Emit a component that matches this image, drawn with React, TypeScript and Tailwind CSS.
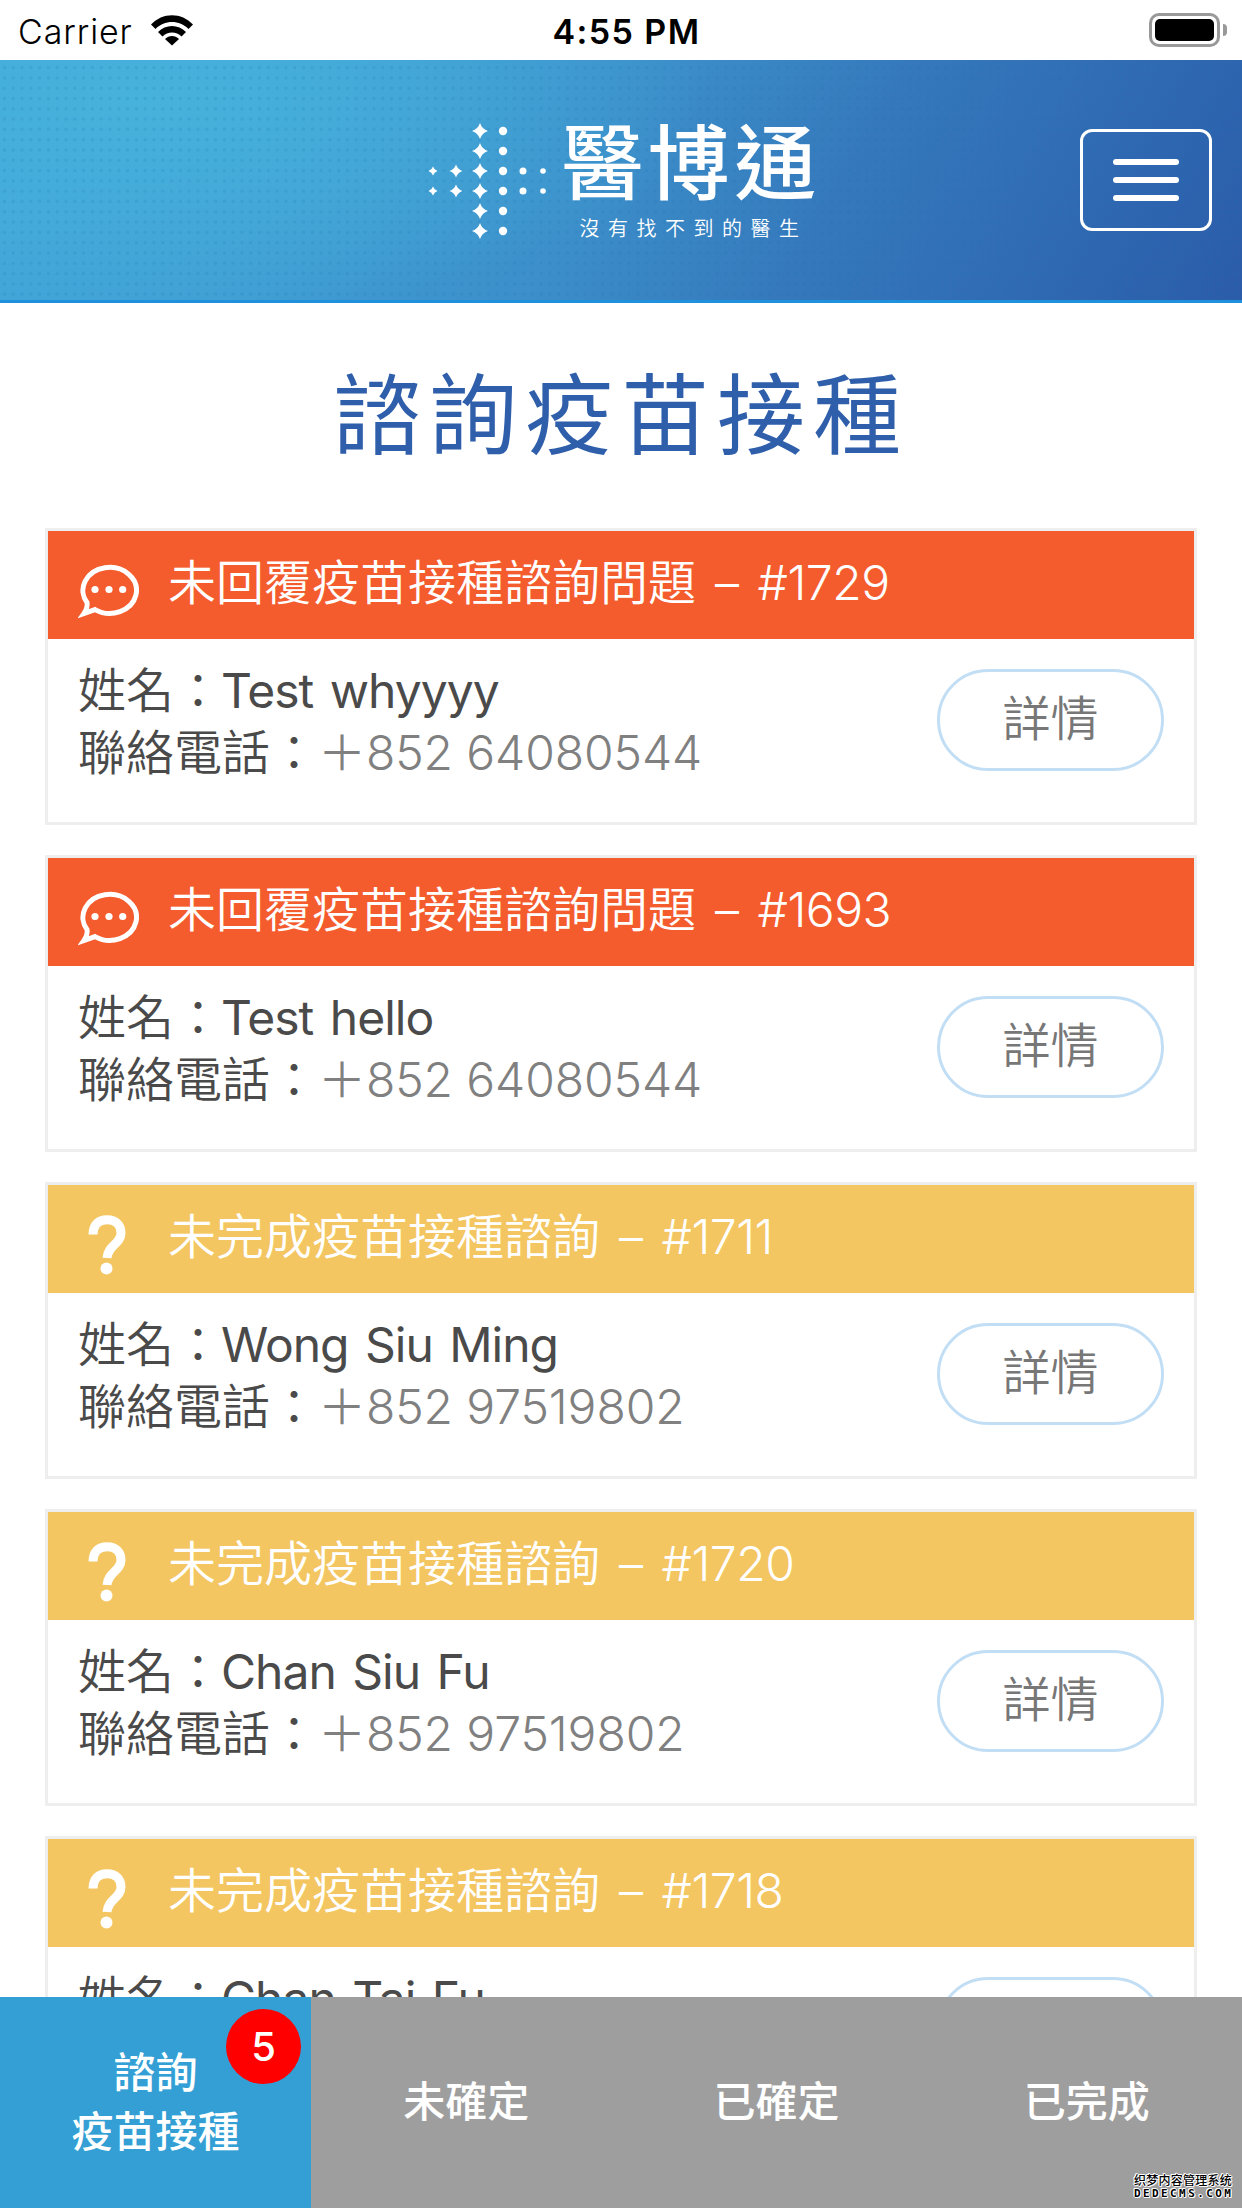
type Inquiry = {
  id: number;
  status: "unreplied" | "incomplete";
  name: string;
  phone: string;
};

const inquiries: Inquiry[] = [
  { id: 1729, status: "unreplied", name: "Test whyyyy", phone: "64080544" },
  { id: 1693, status: "unreplied", name: "Test hello", phone: "64080544" },
  { id: 1711, status: "incomplete", name: "Wong Siu Ming", phone: "97519802" },
  { id: 1720, status: "incomplete", name: "Chan Siu Fu", phone: "97519802" },
  { id: 1718, status: "incomplete", name: "Chan Tai Fu", phone: "97519802" },
];

function StatusBar() {
  return (
    <div className="grid h-[60px] shrink-0 grid-cols-[1fr_auto_1fr] items-center bg-white pt-[3px] pr-[15px] pl-[18px] font-['Inter','Liberation_Sans',sans-serif] text-black">
      <div className="flex items-center gap-[18px]">
        <span className="text-[34px] font-[350] tracking-[0.9px]">Carrier</span>
        <svg viewBox="0 0 42 31" className="mb-[2px] h-[31px] w-[42px]">
          <path d="M0 9.5C11.5-3 30.5-3 42 9.5L37.5 14C28.5 4.8 13.5 4.8 4.5 14Z" />
          <path d="M7 17C14.5 9 27.5 9 35 17L30.5 21.5C25.5 16 16.5 16 11.5 21.5Z" />
          <path d="M14 24C18 20 24 20 28 24L21 30.5Z" />
        </svg>
      </div>
      <div className="pl-[8px] text-center text-[34px] font-semibold tracking-[1.4px]">4:55 PM</div>
      <div className="mb-[3px] flex items-center justify-end gap-[3px]">
        <div className="h-[34px] w-[71px] rounded-[10px] border-[3px] border-[#999] p-[3px]">
          <div className="h-full w-full rounded-[5px] bg-black" />
        </div>
        <div className="h-[12px] w-[4px] rounded-r-full bg-[#999]" />
      </div>
    </div>
  );
}

const star = (x: number, y: number, r: number) => (
  <path
    key={`${x}-${y}`}
    d={`M${x} ${y - r}Q${x + r * 0.25} ${y - r * 0.25} ${x + r} ${y}Q${x + r * 0.25} ${y + r * 0.25} ${x} ${y + r}Q${x - r * 0.25} ${y + r * 0.25} ${x - r} ${y}Q${x - r * 0.25} ${y - r * 0.25} ${x} ${y - r}Z`}
  />
);

function Logo() {
  const rows = [10, 30, 50, 70, 90, 110];
  return (
    <div className="flex items-start pl-[7px] text-white">
      <svg viewBox="0 0 120 120" className="mt-[20px] h-[120px] w-[120px] fill-white">
        {rows.map((y) => star(52, y, 8))}
        {rows.map((y) => (
          <circle key={y} cx="75" cy={y} r="4.2" />
        ))}
        {[50, 70].map((y) => (
          <g key={y}>
            {star(5, y, 4.5)}
            {star(28, y, 6.5)}
            <circle cx="95" cy={y} r="3.5" />
            <circle cx="115" cy={y} r="2.8" />
          </g>
        ))}
      </svg>
      <div className="ml-[13px] flex flex-col">
        <span className="h-[104px] text-[82px] leading-[125px] font-medium tracking-[4.4px]">醫博通</span>
        <span className="ml-[18px] text-[20px] leading-[48px] font-[350] tracking-[8.5px]">沒有找不到的醫生</span>
      </div>
    </div>
  );
}

function Header() {
  return (
    <header className="h-[243px] shrink-0 border-b-[3px] border-[#1e90dc] bg-[radial-gradient(ellipse_560px_220px_at_140px_40px,#47b2dc_0%,#47b2dc00_100%),linear-gradient(120deg,#42a8da_0%,#409fd4_25%,#3c8fca_48%,#3579bc_66%,#2f69b2_85%,#2b5ca9_100%)]">
      <div className="grid h-full grid-cols-[1fr_auto_1fr] items-start bg-[radial-gradient(circle,#1a6fae2c_1.2px,transparent_2.2px)] bg-[length:8.8px_10.3px] bg-[position:0_2.5px] px-[30px] pt-[41px]">
        <div />
        <Logo />
        <button
          aria-label="選單"
          className="mt-[28px] flex h-[102px] w-[132px] flex-col items-center justify-center gap-[12px] justify-self-end rounded-[12px] border-[3px] border-white"
        >
          <span className="h-[6px] w-[66px] rounded-[3px] bg-white" />
          <span className="h-[6px] w-[66px] rounded-[3px] bg-white" />
          <span className="h-[6px] w-[66px] rounded-[3px] bg-white" />
        </button>
      </div>
    </header>
  );
}

function ChatIcon() {
  return (
    <svg viewBox="0 0 61 56" className="h-[56px] w-[61px]">
      <path
        d="M9 39.6A26.8 23 0 1 1 17 46.6L6 50.5Q10 45 9 39.6Z"
        fill="none"
        stroke="white"
        strokeWidth="5"
      />
      <circle cx="17" cy="26.5" r="3.6" fill="white" />
      <circle cx="31" cy="26.5" r="3.6" fill="white" />
      <circle cx="44.7" cy="26.5" r="3.6" fill="white" />
    </svg>
  );
}

function QuestionIcon() {
  return (
    <svg viewBox="0 0 38 60" className="mr-[3px] h-[60px] w-[38px]">
      <path
        d="M5 19.5C5 9.5 10.5 4.7 19 4.7C28 4.7 33 10 33 18C33 29 20 30 19 43"
        fill="none"
        stroke="white"
        strokeWidth="9"
      />
      <circle cx="18.5" cy="53.5" r="6" fill="white" />
    </svg>
  );
}

function InquiryCard({ inquiry }: { inquiry: Inquiry }) {
  const unreplied = inquiry.status === "unreplied";
  return (
    <article className="h-[297px] shrink-0 border-[3px] border-[#eeeeee] bg-white">
      <div className={`flex h-[108px] items-start text-white ${unreplied ? "bg-[#f45b2d]" : "bg-[#f3c661]"}`}>
        <div className="mt-[30px] ml-[30px] flex h-[60px] w-[61px] items-center justify-center">
          {unreplied ? <ChatIcon /> : <QuestionIcon />}
        </div>
        <h2 className="ml-[29px] text-[48px] leading-[104px] font-[350] whitespace-nowrap [word-spacing:6px]">
          {unreplied ? "未回覆疫苗接種諮詢問題" : "未完成疫苗接種諮詢"}
          <span className="tracking-[-0.5px]"> – #{inquiry.id}</span>
        </h2>
      </div>
      <div className="flex items-start justify-between px-[30px] pt-[21px] text-[48px] leading-[62px] font-[350]">
        <div className="text-[#4a4a4a]">
          <p>
            姓名：<span className="-ml-px font-normal tracking-[-1px] [word-spacing:4px]">{inquiry.name}</span>
          </p>
          <p>
            聯絡電話：<span className="tracking-[-0.1px] text-[#808080]">＋852 {inquiry.phone}</span>
          </p>
        </div>
        <button className="mt-[9px] h-[102px] w-[227px] rounded-full border-[3px] border-[#c2def5] pb-[2px] text-[#777]">
          詳情
        </button>
      </div>
    </article>
  );
}

function TabBar() {
  return (
    <nav className="grid h-[211px] shrink-0 grid-cols-[311px_1fr_1fr_1fr] bg-[#9e9e9e] text-center text-[42px] leading-[59px] font-medium text-white">
      <div className="relative flex flex-col items-center justify-center bg-[#339fd5] pb-[2px]">
        <span>諮詢</span>
        <span>疫苗接種</span>
        <span className="absolute top-[12px] right-[10px] flex size-[75px] items-center justify-center rounded-full bg-[#fe0000] text-[40px]">
          5
        </span>
      </div>
      <div className="flex items-center justify-center pb-[2px]">未確定</div>
      <div className="flex items-center justify-center pb-[2px]">已確定</div>
      <div className="relative flex items-center justify-center pb-[2px]">
        已完成
        <div className="absolute right-[10px] bottom-[8px] flex w-[98px] flex-col items-start whitespace-nowrap text-black [text-shadow:1px_0_#fff,-1px_0_#fff,0_1px_#fff,0_-1px_#fff,1px_1px_#fff,-1px_-1px_#fff]">
          <span className="font-['Noto_Sans_CJK_SC',sans-serif] text-[12px] leading-[14px] font-medium tracking-[0.25px]">
            织梦内容管理系统
          </span>
          <span className="font-['DejaVu_Sans_Mono',monospace] text-[11px] leading-[13px] font-bold tracking-[2.4px]">
            DEDECMS.COM
          </span>
        </div>
      </div>
    </nav>
  );
}

export default function App() {
  return (
    <div className="flex h-[2208px] w-[1242px] flex-col overflow-hidden bg-white font-['Inter','Noto_Sans_CJK_TC',sans-serif]">
      <StatusBar />
      <Header />
      <main className="flex min-h-0 flex-1 flex-col overflow-hidden px-[45px]">
        <h1 className="h-[225px] shrink-0 text-center text-[88px] leading-[225px] font-normal tracking-[8px] text-[#2f5fab]">
          諮詢疫苗接種
        </h1>
        <section className="flex flex-col gap-[30px]">
          {inquiries.map((inquiry) => (
            <InquiryCard key={inquiry.id} inquiry={inquiry} />
          ))}
        </section>
      </main>
      <TabBar />
    </div>
  );
}
